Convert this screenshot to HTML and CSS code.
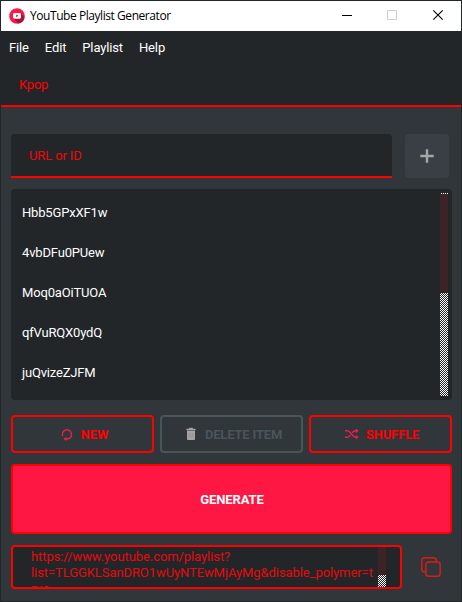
FILE: index.html
```html
<!DOCTYPE html>
<html lang="en">
<head>
<meta charset="utf-8">
<title>YouTube Playlist Generator</title>
<link rel="stylesheet" href="styles.css">
</head>
<body>
<div class="window">
  <header class="titlebar">
    <svg class="logo" width="16" height="16" viewBox="0 0 16 16"><circle cx="8" cy="8" r="7.8" fill="#ff1744"/><path d="M12 5l3.500 4.500A7.800 7.800 0 0 1 9.500 15.600L5 11z" fill="#a81238"/><rect x="4" y="4.900" width="8" height="5.800" rx="1.400" fill="#fff"/><path d="M7.200 6.400v2.800l2.200-1.400z" fill="#d0183c"/></svg>
    <span class="caption">YouTube Playlist Generator</span>
    <div class="controls">
      <svg width="46" height="30" viewBox="0 0 46 30"><path d="M18 14.500h10" stroke="#000"/></svg>
      <svg width="46" height="30" viewBox="0 0 46 30"><path d="M17.500 9.500h9v9h-9z" fill="none" stroke="#ccc"/></svg>
      <svg width="46" height="30" viewBox="0 0 46 30"><path d="M17.300 9.300l9.400 9.400M26.700 9.300l-9.400 9.400" stroke="#000" stroke-width="1.100"/></svg>
    </div>
  </header>
  <nav class="menu"><span>File</span><span>Edit</span><span>Playlist</span><span>Help</span></nav>
  <div class="tabs"><span class="tab">Kpop</span></div>
  <main class="content">
    <div class="entry">
      <div class="field">URL or ID</div>
      <button class="add"><svg width="14" height="14" viewBox="0 0 14 14"><path d="M7 .3v13.400M.3 7h13.400" stroke="#a5a6a8" stroke-width="2.400"/></svg></button>
    </div>
    <div class="list">
      <ul><li>Hbb5GPxXF1w</li><li>4vbDFu0PUew</li><li>Moq0aOiTUOA</li><li>qfVuRQX0ydQ</li><li>juQvizeZJFM</li></ul>
      <div class="scroll"><i class="dots"></i><i class="track"></i><i class="thumb"></i></div>
    </div>
    <div class="actions">
      <button class="btn new"><svg width="12" height="14" viewBox="0 0 12 14"><path d="M1.700 9.200A4.600 4.600 0 1 1 6.300 12H3.500" fill="none" stroke="#e91e4b" stroke-width="1.400"/><path d="M5.400 9.400v4.600L2.500 12z" fill="#e91e4b"/></svg><span>NEW</span></button>
      <button class="btn disabled"><svg width="10" height="14" viewBox="0 0 10 14"><path d="M.5 1.700h2.300L3.400.8h3.200l.6.900h2.300v1.800h-9zM1 4.100h8V12a1 1 0 0 1-1 1H2a1 1 0 0 1-1-1z" fill="#a2a2a2"/><path d="M3.200 6v4.800M5 6v4.800M6.800 6v4.800" stroke="#8d8f90" stroke-width=".6"/></svg><span>DELETE ITEM</span></button>
      <button class="btn shuffle"><svg width="14" height="14" viewBox="0 0 14 14"><path d="M0 3.800h2.500C6 3.800 7 10.200 10.500 10.200H12M0 10.200h2.500c1.200 0 2-.8 2.800-2M7.300 5.700c.8-1.100 1.700-1.900 3.200-1.900H12" fill="none" stroke="#e91e4b" stroke-width="1.500"/><path d="M10.800 1.400l3 2.400-3 2.400zM10.800 7.800l3 2.400-3 2.400z" fill="#e91e4b"/></svg><span>SHUFFLE</span></button>
    </div>
    <button class="generate">GENERATE</button>
    <div class="result">
      <div class="url">
        <div class="text">https://www.youtube.com/playlist?<br>list=TLGGKLSanDRO1wUyNTEwMjAyMg&amp;disable_polymer=t<br>rue</div>
        <div class="scroll"><i class="dots"></i><i class="track"></i><i class="thumb"></i></div>
      </div>
      <svg class="copy" width="20" height="20" viewBox="0 0 20 20" fill="none" stroke="#d91c18" stroke-width="1.500"><rect x="4.900" y="4.900" width="14.300" height="14.300" rx="2.800"/><path d="M4.900 15.100H3.500A2.700 2.700 0 0 1 .8 12.400V3.500A2.700 2.700 0 0 1 3.500.8h8.900a2.700 2.700 0 0 1 2.700 2.700v1.400"/></svg>
    </div>
  </main>
</div>
</body>
</html>
```
FILE: styles.css
```css
* { box-sizing: border-box; }
body { margin: 0; font: 13px/16px Roboto, sans-serif; color: #fff; }
button { font: inherit; padding: 0; }
svg { display: block; flex: none; }
.window { width: 462px; height: 602px; border: 1px solid #232629; background: #31363b; display: flex; flex-direction: column; }
.titlebar { height: 30px; background: #fff; display: flex; align-items: center; padding-left: 8px; color: #000; flex: none; }
.caption { margin-left: 5px; font: 12px/16px "Open Sans", sans-serif; letter-spacing: -0.44px; white-space: nowrap; }
.controls { display: flex; margin-left: auto; }
.controls svg { margin-right: -1px; margin-left: 1px; }
.menu { height: 32px; background: #232629; display: flex; gap: 16px; padding: 9px 8px 0; letter-spacing: -0.14px; flex: none; }
.tabs { height: 44px; background: #232629; border-bottom: 2px solid #f00; padding: 14px 18px 0; color: #f00; letter-spacing: -0.2px; flex: none; }
.tab { display: block; }
.content { padding: 27px 9px 12px 10px; display: flex; flex-direction: column; flex: 1; }
.entry { display: flex; gap: 13px; height: 44px; }
.field { width: 381px; background: #232629; border-bottom: 2px solid #f00; border-radius: 4px 4px 0 0; padding: 14px 18px 0; color: #f0060a; letter-spacing: -0.12px; }
.add { width: 44px; border: 0; border-radius: 4px; background: #3a3f46; display: grid; place-items: center; }
.list { margin-top: 11px; height: 211px; background: #232629; border-radius: 4px; display: flex; justify-content: space-between; padding: 4px; }
.list ul { list-style: none; margin: 0; padding: 0 7px; letter-spacing: -0.17px; }
.list li { height: 40px; line-height: 40px; }
.scroll { width: 8px; display: flex; flex-direction: column; flex: none; }
.dots { height: 1px; background: repeating-linear-gradient(90deg, #232629 0 1px, #fff 1px 2px); }
.track { flex: 1; background: #3b2326; }
.thumb { height: 103px; background: repeating-conic-gradient(#fff 0 25%, #232629 0 50%) 0 0 / 2px 2px; }
.actions { margin-top: 15px; display: grid; grid-template-columns: repeat(3, 143px); gap: 6px; height: 38px; }
.btn { display: flex; align-items: center; justify-content: center; gap: 8px; border: 2px solid #f00; border-radius: 4px; background: none; color: #f00; font-weight: 700; }
.btn span { padding-top: 2px; }
.btn.new { padding-left: 4px; }
.btn.shuffle { gap: 7px; padding-left: 3px; letter-spacing: -0.1px; }
.btn.disabled { border-color: #4a545b; color: #4a545b; gap: 9px; padding-left: 5px; letter-spacing: -0.18px; }
.generate { margin-top: 11px; height: 70px; border: 2px solid #f00; border-radius: 4px; background: #ff1744; color: #fff; font-weight: 700; padding: 2px 0 0 1px; letter-spacing: -0.1px; }
.result { margin-top: 11px; display: flex; height: 44px; align-items: center; }
.url { width: 391px; height: 44px; border: 2px solid #f00; border-radius: 4px; background: #232629; display: flex; overflow: hidden; }
.url .text { width: 347px; margin-left: 18px; padding-top: 2px; color: #e6090c; white-space: nowrap; letter-spacing: -0.08px; }
.url .scroll { height: 42px; margin-top: -2px; }
.url .thumb { height: 12px; }
.copy { margin-left: 19px; }
```
